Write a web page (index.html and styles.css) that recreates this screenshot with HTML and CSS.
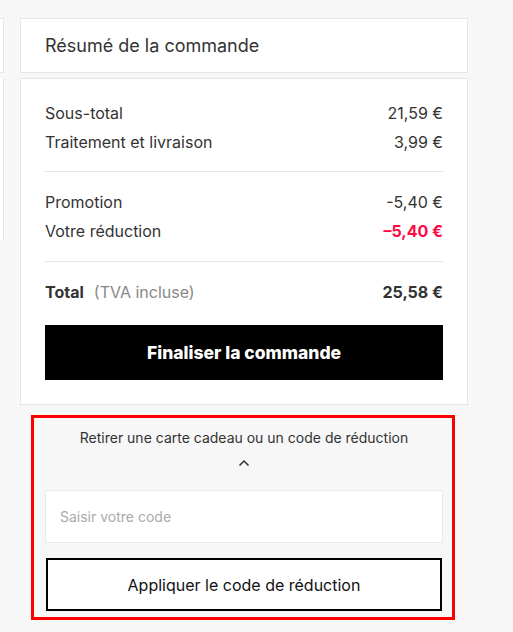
FILE: index.html
```html
<!DOCTYPE html>
<html lang="fr">
<head>
<meta charset="utf-8">
<link rel="stylesheet" href="styles.css">
</head>
<body>
<div class="page">
  <div class="left">
    <div class="left-top"></div>
    <div class="left-body"></div>
  </div>
  <div class="summary">
    <div class="card head">Résumé de la commande</div>
    <div class="card body">
      <div class="group">
        <div class="row"><span>Sous-total</span><span>21,59 €</span></div>
        <div class="row"><span>Traitement et livraison</span><span>3,99 €</span></div>
      </div>
      <div class="group second">
        <div class="row"><span>Promotion</span><span>-5,40 €</span></div>
        <div class="row"><span>Votre réduction</span><span class="red">–5,40 €</span></div>
      </div>
      <div class="row total"><span><b>Total</b><span class="tva">(TVA incluse)</span></span><b>25,58 €</b></div>
      <button class="checkout">Finaliser la commande</button>
    </div>
    <div class="promo">
      <div class="promo-title">Retirer une carte cadeau ou un code de réduction</div>
      <svg class="chev" width="12" height="8" viewBox="0 0 12 8"><path d="M1.5 6.5 L6 2 L10.5 6.5" fill="none" stroke="#333" stroke-width="1.5"/></svg>
      <div class="input">Saisir votre code</div>
      <button class="apply">Appliquer le code de réduction</button>
    </div>
  </div>
</div>
</body>
</html>
```
FILE: styles.css
```css
* { box-sizing: border-box; }
html, body { margin: 0; padding: 0; }
body {
  background: #f7f7f7;
  font-family: "Inter", "Liberation Sans", sans-serif;
  color: #333;
  width: 513px;
  height: 632px;
  overflow: hidden;
}
.page {
  display: flex;
  padding-top: 18px;
}
.left {
  width: 4px;
  display: flex;
  flex-direction: column;
  gap: 5px;
}
.left-top {
  height: 55px;
  background: #fff;
  border: 1px solid #e6e6e6;
  border-left: 0;
}
.left-body {
  height: 162px;
  background: #fff;
  border-right: 1px solid #e6e6e6;
}
.summary {
  margin-left: 16px;
  width: 448px;
  display: flex;
  flex-direction: column;
}
.card {
  background: #fff;
  border: 1px solid #e6e6e6;
}
.head {
  height: 55px;
  padding: 16px 24px 0;
  font-size: 18px;
  line-height: 22px;
  color: #333;
}
.body {
  margin-top: 5px;
  padding: 20px 24px 24px;
}
.group {
  border-bottom: 1px solid #e6e6e6;
  padding-bottom: 14px;
  margin-bottom: 16px;
}
.group.second { padding-bottom: 15px; }
.row {
  display: flex;
  justify-content: space-between;
  font-size: 16px;
  line-height: 29px;
  color: #333;
}
.red { color: #ff0a45; font-weight: 700; }
.total b { font-weight: 700; }
.tva { color: #888; margin-left: 10px; }
.checkout {
  display: block;
  width: 100%;
  height: 55px;
  margin-top: 18px;
  background: #000;
  color: #fff;
  border: 0;
  font-family: inherit;
  font-size: 17.5px;
  font-weight: 800;
}
.promo {
  margin: 10px 13px 0 11px;
  border: 3px solid #ff0000;
  height: 205px;
  padding: 10px 9px 0 11px;
  display: flex;
  flex-direction: column;
  align-items: center;
}
.promo-title {
  font-size: 14px;
  line-height: 20px;
  color: #333;
}
.chev { margin-top: 11px; }
.input {
  align-self: stretch;
  margin-top: 23px;
  height: 53px;
  background: #fff;
  border: 1px solid #eaeaea;
  padding: 0 14px;
  font-size: 14px;
  line-height: 51px;
  color: #aaa;
}
.apply {
  align-self: stretch;
  margin: 15px 1px 0;
  height: 53px;
  background: #fff;
  border: 2px solid #000;
  font-family: inherit;
  font-size: 16px;
  color: #111;
}
```
